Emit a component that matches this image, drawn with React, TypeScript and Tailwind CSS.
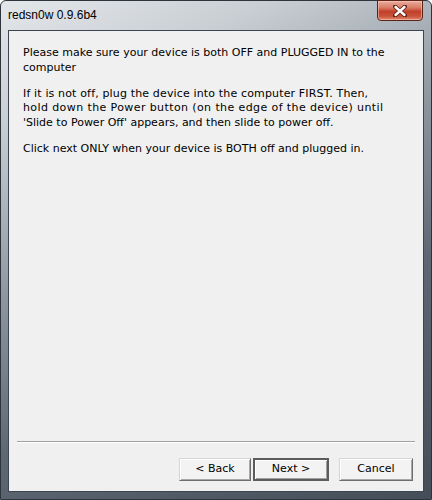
import React from "react";

const font = { fontFamily: '"Liberation Sans", Arial, sans-serif' };
const bodyFont = { fontFamily: '"DejaVu Sans", Verdana, sans-serif' };

function Btn({ label, w, def }: { label: string; w: string; def?: boolean }) {
  return (
    <div
      className={`${w} h-[23px] flex items-center justify-center text-[11px] text-black bg-[#f3f3f3] ${
        def
          ? "border-2 border-[#5c5c5c] shadow-[inset_1px_1px_0_#ffffff,inset_-1px_-1px_0_#a0a0a0]"
          : "border border-t-[#d6d6d6] border-l-[#d6d6d6] border-r-[#6e6e6e] border-b-[#6e6e6e] shadow-[inset_1px_1px_0_#ffffff,inset_-1px_-1px_0_#a8a8a8]"
      }`}
      style={bodyFont}
    >
      {label}
    </div>
  );
}

export default function App() {
  return (
    <div className="w-[432px] h-[500px] bg-white" style={font}>
      <div className="relative w-[432px] h-[500px] rounded-t-[6px] border border-[#2e343b] bg-[linear-gradient(155deg,#e4e7ea_0%,#c9ced3_18%,#8f98a1_42%,#5e6874_65%,#444d58_100%)] pl-[7px] pr-[7px] pb-[7px] pt-[29px] flex flex-col">
        <div className="absolute left-[7px] top-[6px] text-[12px] text-black leading-[16px]">redsn0w 0.9.6b4</div>
        <div className="absolute right-[8px] top-[-1px] w-[46px] h-[21px] rounded-b-[4px] border border-[#5a2318] bg-[linear-gradient(180deg,#e9ad9e_0%,#d87d66_35%,#c2402a_55%,#c9523a_80%,#e08a70_100%)] flex items-center justify-center shadow-[inset_0_0_0_1px_rgba(255,210,200,0.5)]">
          <svg width="14" height="12" viewBox="0 0 14 12">
            <path d="M2 1.5 L12 10.5 M12 1.5 L2 10.5" stroke="#5a1e14" strokeWidth="4" strokeLinecap="round" />
            <path d="M2.5 2 L11.5 10 M11.5 2 L2.5 10" stroke="#ffffff" strokeWidth="2.4" strokeLinecap="round" />
          </svg>
        </div>
        <div className="flex-1 flex flex-col bg-[#f0f0f0] border border-[#3c4550]">
          <div className="pt-[15px] pl-[14px] w-[405px] text-[11px] leading-[14.5px] text-black" style={bodyFont}>
            <p>Please make sure your device is both OFF and PLUGGED IN to the computer</p>
            <p className="mt-[11.5px]">
              <span className="tracking-[0.15px]">If it is not off, plug the device into the computer FIRST. Then,</span>
              <br />
              <span className="tracking-[0.4px]">hold down the Power button (on the edge of the device) until</span>
              <br />
              'Slide to Power Off' appears, and then slide to power off.
            </p>
            <p className="mt-[11.5px]">Click next ONLY when your device is BOTH off and plugged in.</p>
          </div>
          <div className="flex-1" />
          <div className="mx-[8px] h-[2px] border-t border-[#a0a0a0] border-b border-b-white" />
          <div className="flex justify-end mt-[15px] mb-[10px] mr-[10px]">
            <Btn label="< Back" w="w-[72px]" />
            <div className="ml-[2px]">
              <Btn label="Next >" w="w-[76px]" def />
            </div>
            <div className="ml-[10px]">
              <Btn label="Cancel" w="w-[74px]" />
            </div>
          </div>
        </div>
      </div>
    </div>
  );
}
